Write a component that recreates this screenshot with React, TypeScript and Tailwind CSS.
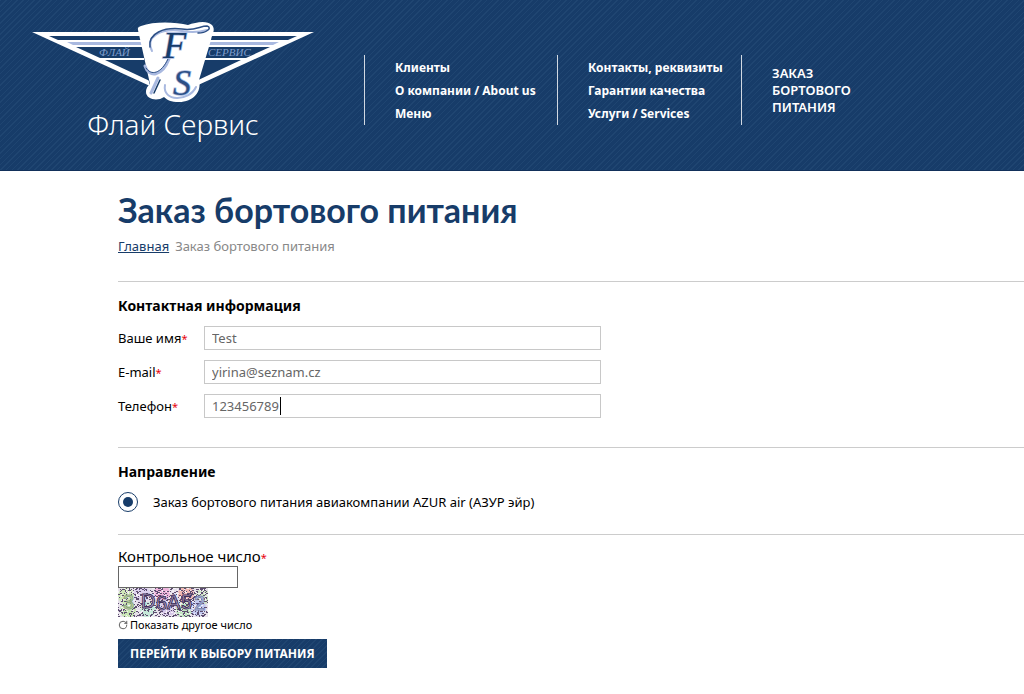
import { useState, type ReactNode } from 'react'
import { RotateCw } from 'lucide-react'

const companyLinks = ['Клиенты', 'О компании / About us', 'Меню']
const serviceLinks = ['Контакты, реквизиты', 'Гарантии качества', 'Услуги / Services']

const stripes =
  'bg-[#173c69] bg-[repeating-linear-gradient(135deg,#1f4571_0px,#1f4571_1px,#173c69_1px,#173c69_4px)]'

function Wing() {
  return (
    <g>
      <path d="M0 12 H112 V40 L118 66 Z" fill="#fff" />
      <path d="M17 16 H112 V20 H26 Z" fill="#173c69" />
      <path d="M35 22 H112 V25 H41 Z" fill="#a9b9e0" />
      <path d="M44 27 H112 V38 H68 Z" fill="#173c69" />
      <path d="M73 40 H114 L120 62 Z" fill="#173c69" />
    </g>
  )
}

function Logo() {
  return (
    <a href="#" className="flex w-[282px] flex-col items-center text-white">
      <svg viewBox="0 0 282 84" className="h-[84px] w-full" aria-hidden="true">
        <Wing />
        <g transform="translate(282 0) scale(-1 1)">
          <Wing />
        </g>
        <g
          fill="#7f9ccc"
          fontFamily="'Liberation Serif', serif"
          fontStyle="italic"
          fontSize="11"
        >
          <text x="67" y="36">ФЛАЙ</text>
          <text x="176" y="36">СЕРВИС</text>
        </g>
        <path
          d="M106 10 Q105 7 109 6 C122 1 144 2 156 5 C164 2 175 0 180 5 C184 10 180 14 179 20 L167 60 C170 72 161 82 147 82 C139 82 135 80 132 77 C125 82 114 79 114 72 Q114 67 118 64 Z"
          fill="#fff"
        />
        <g fill="none" strokeLinecap="round">
          {/* swash over the top of the shield */}
          <path d="M120 31 C113 17 128 8 150 11 C162 13 168 12 175 10" stroke="#a9b9e0" strokeWidth="2" />
          <path d="M118 27 C116 13 132 7 150 9 C163 11 168 6 175 6 C181 8 174 13 166 13" stroke="#2c4f85" strokeWidth="1.5" />
          {/* tail under the first initial */}
          <path d="M137 39 C130 57 117 58 113 46" stroke="#a9b9e0" strokeWidth="3" />
          <path d="M136 39 C129 54 119 56 114 48" stroke="#2c4f85" strokeWidth="1" />
          {/* lead-in of the second initial */}
          <path d="M126 58 L119 73" stroke="#a9b9e0" strokeWidth="3" />
          <path d="M128 60 L122 73" stroke="#173c69" strokeWidth="1.5" />
          <path d="M133 65 C130 82 157 82 164 67" stroke="#a9b9e0" strokeWidth="2" />
        </g>
        <g fontFamily="'Liberation Serif', serif" fontStyle="italic" stroke="#a9b9e0" strokeWidth="1.5" paintOrder="stroke">
          <text x="131" y="38" fontSize="38" fill="#173c69">F</text>
          <text x="141" y="75" fontSize="36" fill="#2c4f85">S</text>
        </g>
      </svg>
      <span className="text-[28px] font-light leading-[40px]">Флай Сервис</span>
    </a>
  )
}

function NavColumn({ links, className }: { links: string[]; className: string }) {
  return (
    <ul className={`h-[70px] shrink-0 border-l border-white/80 pl-[30px] pt-px ${className}`}>
      {links.map((link) => (
        <li key={link} className="text-[12px] font-bold leading-[23px]">
          <a href="#" className="whitespace-nowrap hover:underline">{link}</a>
        </li>
      ))}
    </ul>
  )
}

function Header() {
  return (
    <header className={`flex items-start border-b border-[#12305a] pb-[26px] text-white ${stripes}`}>
      <div className="w-[364px] shrink-0 pl-8 pt-5">
        <Logo />
      </div>
      <nav className="flex pt-[55px]">
        <NavColumn links={companyLinks} className="w-[193px]" />
        <NavColumn links={serviceLinks} className="w-[184px]" />
        <div className="flex h-[70px] items-center border-l border-white/80 pl-[30px]">
          <a href="#" className="w-24 text-[13px] font-semibold uppercase leading-[17px]">
            Заказ бортового питания
          </a>
        </div>
      </nav>
    </header>
  )
}

function Required() {
  return <span className="text-[11px] text-red-600">*</span>
}

interface FieldProps {
  id: string
  label: string
  type?: string
  value: string
  onChange: (value: string) => void
  children?: ReactNode
}

function Field({ id, label, type = 'text', value, onChange, children }: FieldProps) {
  return (
    <div className="flex items-center">
      <label htmlFor={id} className="w-[86px] shrink-0">
        {label}
        <Required />
      </label>
      <div className="relative w-full max-w-[397px]">
        <input
          id={id}
          type={type}
          value={value}
          onChange={(e) => onChange(e.target.value)}
          className="block h-6 w-full border border-[#c8c8c8] bg-white px-[7px] text-[#666] outline-none"
        />
        {children}
      </div>
    </div>
  )
}

// Small seeded generator, so the noise is the same on every render
function makeNoise(count: number) {
  let seed = 7
  const next = () => {
    seed = (seed * 16807) % 2147483647
    return seed / 2147483647
  }
  return Array.from({ length: count }, () => ({
    x: Math.floor(next() * 90),
    y: Math.floor(next() * 29),
    w: next() > 0.7 ? 2 : 1,
    dark: next() > 0.35,
  }))
}

const noise = makeNoise(1000)
const blobs = [
  [8, 8, '#cfe8b8'], [24, 6, '#dcd0ee'], [44, 5, '#efb5dc'], [68, 6, '#f0b9b4'], [84, 9, '#cfe3c4'],
  [10, 22, '#c8e6b4'], [30, 22, '#c5e8d8'], [50, 20, '#d8c8ea'], [66, 22, '#c0e4c0'], [80, 20, '#c3c9f0'],
] as const

function Captcha() {
  return (
    <svg viewBox="0 0 90 29" className="block h-[29px] w-[90px]" role="img" aria-label="Контрольное число">
      <rect width="90" height="29" fill="#e6e0ea" />
      {blobs.map(([x, y, color]) => (
        <circle key={`${x}-${y}`} cx={x} cy={y} r="8" fill={color} />
      ))}
      {noise.map((dot, i) => (
        <rect key={i} x={dot.x} y={dot.y} width={dot.w} height="1" fill={dot.dark ? '#5d4d70' : '#f4f0f6'} />
      ))}
      <g fontFamily="'Liberation Sans', sans-serif" fontSize="20" fill="#cfc4e4" stroke="#41305a" strokeWidth="1">
        <text x="5" y="21" fill="#cfe8b8" stroke="#8ba37c">3</text>
        <text x="23" y="20">D</text>
        <text x="38" y="22">6</text>
        <text x="49" y="21">A</text>
        <text x="63" y="21">5</text>
        <text x="76" y="22" fill="#c3c9f0" stroke="#8089b0">2</text>
      </g>
    </svg>
  )
}

export default function App() {
  const [name, setName] = useState('Test')
  const [email, setEmail] = useState('yirina@seznam.cz')
  const [phone, setPhone] = useState('123456789')

  return (
    <div className="min-h-screen bg-white font-['Noto_Sans',sans-serif] text-[13px] leading-[20px] text-black">
      <Header />

      <main className="pl-[118px] pt-[18px]">
        <h1 className="font-['Lato','Noto_Sans',sans-serif] text-[34px] font-bold leading-[42px] text-[#173c69]">
          Заказ бортового питания
        </h1>
        <nav className="mt-[5px] flex gap-[6px]">
          <a href="#" className="text-[#173c69] underline">Главная</a>
          <span className="text-[#888]">Заказ бортового питания</span>
        </nav>

        <form onSubmit={(e) => e.preventDefault()}>
          <section className="mt-[25px] border-t border-[#ccc] pb-[29px] pt-[14px]">
            <h2 className="text-[14px] font-bold">Контактная информация</h2>
            <div className="mt-[10px] flex flex-col gap-[10px]">
              <Field id="name" label="Ваше имя" value={name} onChange={setName} />
              <Field id="email" label="E-mail" type="email" value={email} onChange={setEmail} />
              <Field id="phone" label="Телефон" type="tel" value={phone} onChange={setPhone}>
                {/* text cursor */}
                <span className="absolute left-[76px] top-[3px] h-[18px] w-px bg-black" />
              </Field>
            </div>
          </section>

          <section className="border-t border-[#ccc] pb-[22px] pt-[14px]">
            <h2 className="text-[14px] font-bold">Направление</h2>
            <label className="mt-[10px] flex items-center gap-[15px]">
              <input
                type="radio"
                name="direction"
                defaultChecked
                className="size-5 appearance-none rounded-full border border-[#173c69] bg-clip-content p-[4px] checked:bg-[#173c69]"
              />
              Заказ бортового питания авиакомпании AZUR air (АЗУР эйр)
            </label>
          </section>

          <section className="flex flex-col items-start border-t border-[#ccc] pt-[13px]">
            <label htmlFor="captcha" className="text-[15px] leading-[17px]">
              Контрольное число
              <Required />
            </label>
            <input id="captcha" type="text" className="h-[22px] w-[120px] border border-[#666] px-1 outline-none" />
            <Captcha />
            <button type="button" className="flex items-center gap-[2px] text-[11px] leading-[16px]">
              <RotateCw size={10} className="text-[#444]" />
              Показать другое число
            </button>
            <button
              type="submit"
              className={`mt-[6px] h-[29px] px-3 text-[12px] font-bold uppercase text-white ${stripes}`}
            >
              Перейти к выбору питания
            </button>
          </section>
        </form>
      </main>
    </div>
  )
}
